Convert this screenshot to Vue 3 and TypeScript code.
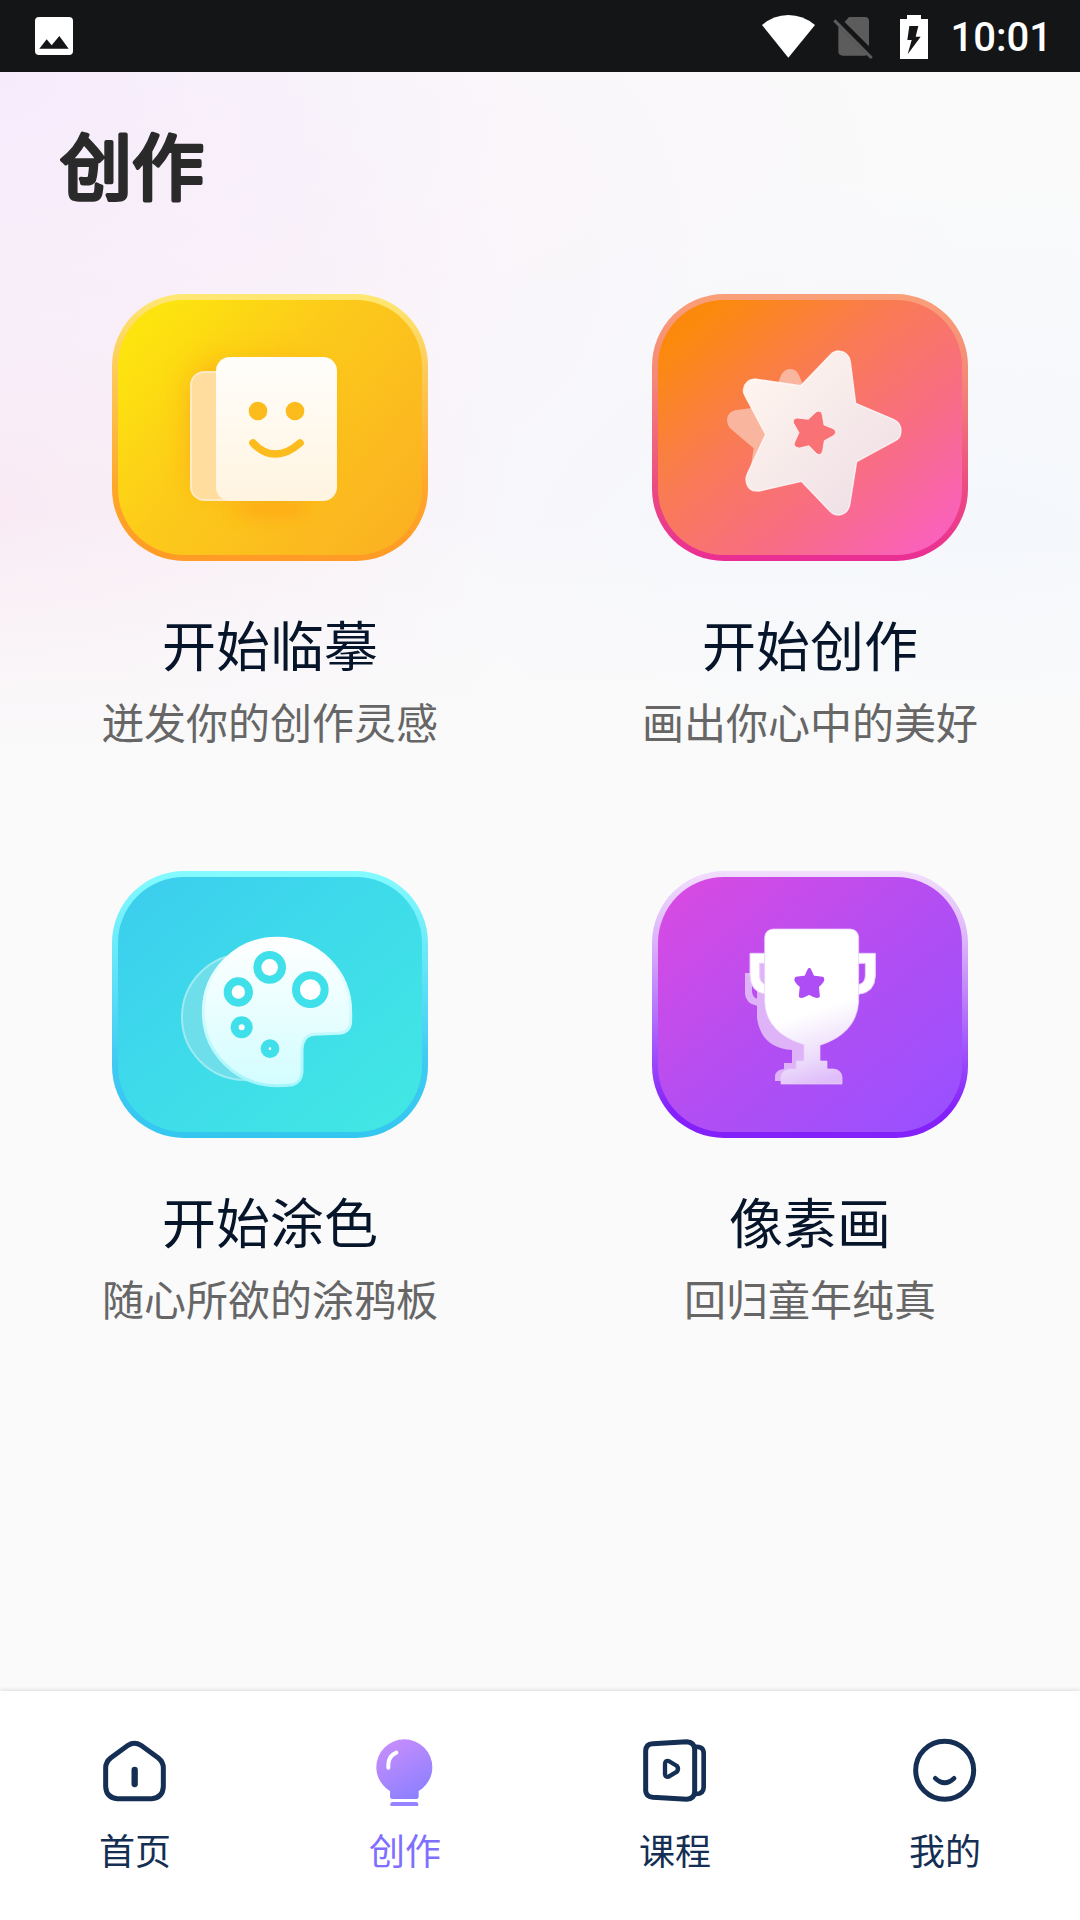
<script setup lang="ts">
import { ref } from 'vue'

type CardIcon = 'copy' | 'star' | 'palette' | 'trophy'
type TabIcon = 'home' | 'create' | 'course' | 'mine'

interface Card {
  icon: CardIcon
  title: string
  note: string
  box: string
}

interface Tab {
  icon: TabIcon
  label: string
  box: string
}

const cards: Card[] = [
  { icon: 'copy', title: '开始临摹', note: '迸发你的创作灵感', box: '36 42 945 801' },
  { icon: 'star', title: '开始创作', note: '画出你心中的美好', box: '36 42 945 801' },
  { icon: 'palette', title: '开始涂色', note: '随心所欲的涂鸦板', box: '36 33 945 801' },
  { icon: 'trophy', title: '像素画', note: '回归童年纯真', box: '36 33 945 801' },
]

const tabs: Tab[] = [
  { icon: 'home', label: '首页', box: '57 162 216 216' },
  { icon: 'create', label: '创作', box: '867 162 216 216' },
  { icon: 'course', label: '课程', box: '117 162 216 216' },
  { icon: 'mine', label: '我的', box: '927 162 216 216' },
]

const active = ref<TabIcon>('create')
</script>

<template>
  <div class="app">
    <header class="status">
      <svg class="status-picture" viewBox="105 51 114 114" aria-hidden="true">
        <rect x="105" y="51" width="114" height="114" rx="12" fill="#fff" />
        <path d="M118 146 140 118 155 136 178 108 206 146Z" fill="#141517" />
      </svg>
      <div class="status-right">
        <svg class="status-wifi" viewBox="60 36 162 138" aria-hidden="true">
          <path d="M142 170 63 72Q98 42 142 42T222 72Z" fill="#fff" />
        </svg>
        <svg class="status-sim" viewBox="276 36 120 138" aria-hidden="true">
          <path d="M324 48H372Q384 48 384 60V136L311 63ZM292 76 378 162Q376 164 370 164H306Q292 164 292 151Z" fill="#5c5c5c" />
          <path d="M280 58 392 171" stroke="#5c5c5c" stroke-width="9" />
        </svg>
        <svg class="status-battery" viewBox="450 36 126 138" aria-hidden="true">
          <path d="M477 54H498V42H540V54H561V174H477Z" fill="#fff" />
          <path d="M505 75H532L524 107H539L500 160 512 117H499Z" fill="#141517" />
        </svg>
        <time class="clock">10:01</time>
      </div>
    </header>

    <main class="page">
      <h1 class="heading">
        <svg class="heading-art" viewBox="0 0 160 100">
          <text x="0" y="77">创作</text>
        </svg>
      </h1>

      <section class="cards">
        <a v-for="card in cards" :key="card.icon" class="card" href="#">
          <span class="tile" :class="card.icon">
            <svg class="tile-art" :viewBox="card.box" aria-hidden="true">
              <template v-if="card.icon === 'copy'">
                <defs>
                  <linearGradient id="sheet" x1="0" y1="0" x2="0" y2="1">
                    <stop offset="0" stop-color="#fffefb" />
                    <stop offset="1" stop-color="#fff4e0" />
                  </linearGradient>
                  <filter id="sheetGlow" x="-50%" y="-50%" width="200%" height="200%">
                    <feGaussianBlur stdDeviation="42" />
                  </filter>
                  <filter id="footGlow" x="-50%" y="-100%" width="200%" height="300%">
                    <feGaussianBlur stdDeviation="22" />
                  </filter>
                </defs>
                <rect x="270" y="250" width="400" height="400" rx="90" fill="#fcaa18" opacity=".8" filter="url(#sheetGlow)" />
                <ellipse cx="515" cy="690" rx="110" ry="26" fill="#ffa514" opacity=".7" filter="url(#footGlow)" />
                <rect x="273" y="276" width="200" height="384" rx="40" fill="#ffdd9e" stroke="#ffeac2" stroke-width="6" />
                <rect x="348" y="231" width="363" height="432" rx="42" fill="url(#sheet)" />
                <circle cx="474" cy="393" r="28" fill="#fcbc1d" />
                <circle cx="585" cy="393" r="28" fill="#fcbc1d" />
                <path d="M459 489Q489 522 526 522T600 489" fill="none" stroke="#fcbc1d" stroke-width="23" stroke-linecap="round" />
              </template>

              <template v-else-if="card.icon === 'star'">
                <defs>
                  <linearGradient id="starFace" x1="0" y1="0" x2="1" y2="1">
                    <stop offset=".1" stop-color="#fff4ee" />
                    <stop offset=".85" stop-color="#efe0e6" />
                  </linearGradient>
                </defs>
                <path d="M413 312 422 288Q432 267 451 267T478 288L488 312 470 440 377 463 332 565 341 505 272 446Q261 436 261 418 264 396 285 391L335 384Z" fill="#fab59e" />
                <path d="M482 317 570 226Q580 213 596 213 626 215 631 245L647 370 760 418Q783 428 783 452T762 484L650 545 630 670Q625 703 596 705 580 705 570 694L484 604 358 633Q320 637 318 598 318 590 322 581L377 463 315 348Q310 340 310 330 314 299 345 297Z" fill="url(#starFace)" stroke="#fff" stroke-opacity=".75" stroke-width="4" />
                <path d="M505 418 528 396Q544 388 547 406L552 435 580 446Q594 457 580 467L553 482 548 513Q542 530 529 520L507 497 479 504Q460 502 463 489L477 458 461 430Q456 416 472 414Z" fill="#f97276" stroke="#fff" stroke-opacity=".7" stroke-width="3" />
              </template>

              <template v-else-if="card.icon === 'palette'">
                <defs>
                  <linearGradient id="board" x1="0" y1="0" x2="0" y2="1">
                    <stop offset="0" stop-color="#fff" />
                    <stop offset="1" stop-color="#d2fdff" />
                  </linearGradient>
                  <linearGradient id="boardEdge" x1="0" y1="0" x2="0" y2="1">
                    <stop offset="0" stop-color="#fff" />
                    <stop offset="1" stop-color="#a4f6fc" />
                  </linearGradient>
                </defs>
                <circle cx="435" cy="471" r="189" fill="#6edfea" stroke="#9ceaf2" stroke-width="6" />
                <path d="M531 235A221 221 0 0 1 752 456V484Q751 517 715 520L642 523Q608 526 606 568V636Q604 668 578 674 557 677 531 677A221 221 0 0 1 531 235Z" fill="url(#board)" stroke="url(#boardEdge)" stroke-width="9" />
                <g fill="#fff" stroke="#40e0ea">
                  <circle cx="509" cy="322" r="37" stroke-width="24" />
                  <circle cx="631" cy="389" r="43" stroke-width="24" />
                  <circle cx="415" cy="396" r="32" stroke-width="24" />
                  <circle cx="425" cy="502" r="21" stroke-width="24" />
                  <circle cx="510" cy="566" r="16" stroke-width="24" />
                </g>
              </template>

              <template v-else>
                <defs>
                  <linearGradient id="cup" gradientUnits="userSpaceOnUse" x1="440" y1="300" x2="560" y2="660">
                    <stop offset=".45" stop-color="#fff" />
                    <stop offset=".8" stop-color="#ecdcfb" />
                    <stop offset="1" stop-color="#dfbdfa" />
                  </linearGradient>
                </defs>
                <path d="M315 339H336V395Q338 411 351 416V310H400V500L500 540V663H405V650Q406 629 432 627V609H456V570Q364 564 351 475V437Q318 432 315 402Z" fill="#dfb3f8" />
                <g fill="url(#cup)" stroke="#ead0fb" stroke-width="3">
                  <path d="M375 280H330V348Q332 398 380 403V374Q360 370 359 348V310H375Z" />
                  <path d="M655 280H706V348Q704 398 655 403V374Q675 370 676 348V310H655Z" />
                  <path d="M374 232Q376 208 400 207H630Q654 208 656 232V425Q650 520 540 556V603H561V627H580Q604 629 606 652V672H423V652Q425 629 450 627H469V603H492V554Q378 520 374 425Z" stroke-opacity=".7" />
                </g>
                <path d="M508 330 518 352 547 356Q551 362 531 378L534 408Q529 411 508 398 486 411 482 408L485 378Q465 362 469 356L498 352Z" fill="#ae4df6" stroke="#ae4df6" stroke-width="11" stroke-linejoin="round" />
              </template>
            </svg>
          </span>
          <span class="card-title">{{ card.title }}</span>
          <span class="card-note">{{ card.note }}</span>
        </a>
      </section>
    </main>

    <nav class="tabs">
      <a
        v-for="tab in tabs"
        :key="tab.icon"
        class="tab"
        :class="{ active: active === tab.icon }"
        href="#"
        @click.prevent="active = tab.icon"
      >
        <svg class="tab-icon" :viewBox="tab.box" aria-hidden="true">
          <g v-if="tab.icon === 'home'" fill="none" stroke="#142f53" stroke-linecap="round">
            <path d="M144 196Q163 184 183 196L235 234Q250 246 250 264V320Q248 354 215 356H112Q79 354 77 320V264Q77 246 92 234Z" stroke-width="15" />
            <path d="M164 270V312" stroke-width="19" />
          </g>
          <g v-else-if="tab.icon === 'create'">
            <defs>
              <linearGradient id="bulb" gradientUnits="userSpaceOnUse" x1="925" y1="190" x2="1010" y2="350">
                <stop offset="0" stop-color="#c58dfc" />
                <stop offset="1" stop-color="#8d80ff" />
              </linearGradient>
            </defs>
            <path d="M930 333C905 318 889 292 889 262A84 84 0 0 1 1057 262C1057 292 1041 318 1016 333V350Q1016 357 1009 357H937Q930 357 930 350Z" fill="url(#bulb)" />
            <rect x="931" y="366" width="84" height="14" rx="7" fill="#9583ff" />
            <path d="M925 263V254Q925 228 949 218" fill="none" stroke="#fff" stroke-width="12" stroke-linecap="round" />
          </g>
          <g v-else-if="tab.icon === 'course'" fill="none" stroke="#142f53" stroke-linejoin="round">
            <path d="M137 212Q138 192 158 191L260 185Q283 186 284 208V335Q283 357 260 358L158 352Q138 350 137 332Z" stroke-width="15" />
            <path d="M286 201Q311 198 311 220V322Q310 343 286 342" stroke-width="14" />
            <path d="M195 251Q196 241 206 243L231 258Q237 267 231 275L206 290Q196 292 195 283Z" stroke-width="13" />
          </g>
          <g v-else fill="none" stroke="#142f53" stroke-linecap="round">
            <circle cx="1034" cy="271" r="87" stroke-width="15" />
            <path d="M1006 295Q1034 322 1062 295" stroke-width="14" />
          </g>
        </svg>
        <span class="tab-label">{{ tab.label }}</span>
      </a>
    </nav>
  </div>
</template>

<style>
body {
  margin: 0;
}
</style>

<style scoped>
.app {
  display: flex;
  flex-direction: column;
  min-height: 100vh;
  background: #fafafa;
  font-family: "Noto Sans CJK SC", "Noto Sans", sans-serif;
}

svg {
  display: block;
}

a {
  color: inherit;
  text-decoration: none;
}

.status {
  display: flex;
  align-items: center;
  justify-content: space-between;
  height: 72px;
  padding: 0 28px 0 35px;
  background: #141517;
}

.status-picture {
  width: 38px;
  height: 38px;
}

.status-right {
  display: flex;
  align-items: center;
  gap: 18px;
}

.status-wifi {
  width: 54px;
  height: 46px;
}

.status-sim {
  width: 40px;
  height: 46px;
}

.status-battery {
  width: 42px;
  height: 46px;
}

.clock {
  padding-top: 3px;
  color: #fff;
  font: 500 40px/72px Roboto, sans-serif;
}

.page {
  flex: 1;
  background:
    linear-gradient(to bottom, rgba(250, 250, 250, 0) 440px, #fafafa 700px),
    radial-gradient(520px 420px at 0 0, #f6ebfc, rgba(246, 235, 252, 0)),
    radial-gradient(520px 520px at 0 440px, #f9eaf4, rgba(249, 234, 244, 0)),
    radial-gradient(760px 420px at 90% 480px, #f4f7fc, rgba(244, 247, 252, 0)),
    radial-gradient(500px 600px at 42% 200px, #faf5fa, rgba(250, 245, 250, 0)),
    #fafafa;
}

.heading {
  margin: 0;
  padding: 45px 60px 77px;
}

.heading-art {
  width: 160px;
  height: 100px;
  overflow: visible;
}

.heading-art text {
  fill: #2a2a2a;
  stroke: #2a2a2a;
  stroke-width: 4px;
  stroke-linejoin: round;
  font-size: 72px;
  font-weight: 400;
}

.cards {
  display: grid;
  grid-template-columns: 1fr 1fr;
  row-gap: 118px;
}

.card {
  display: flex;
  flex-direction: column;
  align-items: center;
}

.tile {
  box-sizing: border-box;
  width: 316px;
  height: 267px;
  border: 6px solid transparent;
  border-radius: 72px;
  background-origin: border-box;
  background-clip: padding-box, border-box;
}

.tile-art {
  width: 315px;
  height: 267px;
  margin: -6px;
}

.tile.copy {
  background-image:
    linear-gradient(130deg, #fde40e 12%, #fccb1a 42%, #fbb022 95%),
    linear-gradient(#ffe873, #fdc956 30%, #ffa729 72%, #ff9b26);
}

.tile.star {
  background-image:
    linear-gradient(140deg, #fb8a0c 12%, #f97b54 40%, #f96d84 66%, #fa5fc6 96%),
    linear-gradient(#fa9f78, #f48a76 30%, #ec4b80 72%, #ea2e94);
}

.tile.palette {
  background-image:
    linear-gradient(140deg, #3bccee, #3edcea 50%, #42e8e2),
    linear-gradient(#84fbff, #6ceafa 28%, #3fc9f3 72%, #33c7f0);
}

.tile.trophy {
  background-image:
    linear-gradient(140deg, #d94ae2 5%, #b34ef2 50%, #9850ff 95%),
    linear-gradient(#f2defd, #dcb4fb 26%, #a357fb 65%, #8420fa 90%);
}

.card-title {
  margin-top: 44px;
  color: #06152a;
  font-size: 54px;
  line-height: 78px;
}

.card-note {
  margin-top: 8px;
  margin-bottom: 2px;
  color: #666;
  font-size: 42px;
  line-height: 60px;
}

.tabs {
  display: grid;
  grid-template-columns: repeat(4, 1fr);
  height: 229px;
  background: #fff;
  box-shadow: 0 -1px 4px rgba(0, 0, 0, 0.12);
}

.tab {
  display: flex;
  flex-direction: column;
  align-items: center;
  gap: 16px;
  padding-top: 43px;
  color: #142f53;
}

.tab.active {
  color: #806fff;
}

.tab-icon {
  width: 72px;
  height: 72px;
}

.tab-label {
  font-size: 36px;
  line-height: 54px;
}
</style>
